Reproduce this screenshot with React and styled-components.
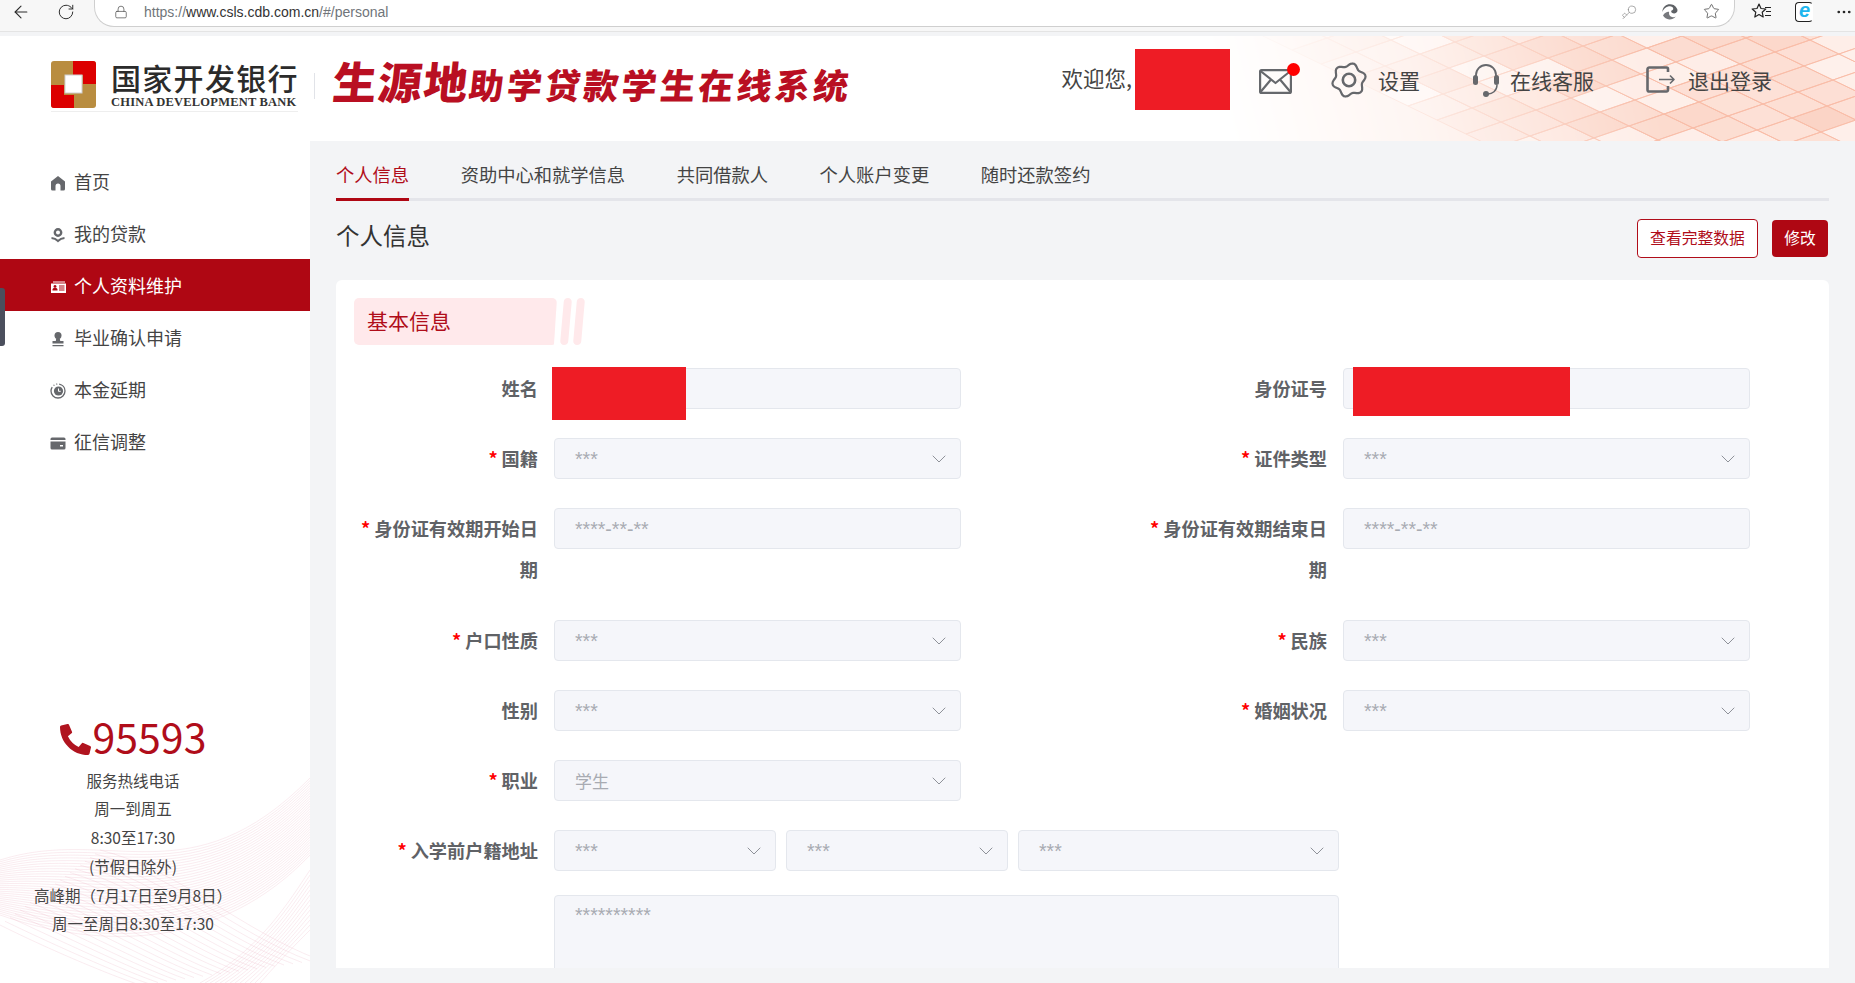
import styled, { createGlobalStyle } from "styled-components";
import { ArrowLeft, RotateCw, Lock, Key, Star, MoreHorizontal, ChevronDown } from "lucide-react";
import { FaPhoneAlt } from "react-icons/fa";

const GlobalStyle = createGlobalStyle`
  html, body {
    margin: 0;
    padding: 0;
    height: 983px;
    overflow: hidden;
    background: #fff;
    font-family: "Noto Sans CJK SC", "Noto Sans", sans-serif;
  }
  * { box-sizing: border-box; }
`;

const menuItems = [
  { key: "home", label: "首页", icon: <HomeIcon /> },
  { key: "loan", label: "我的贷款", icon: <LoanIcon /> },
  { key: "profile", label: "个人资料维护", icon: <CardIcon />, active: true },
  { key: "graduate", label: "毕业确认申请", icon: <StampIcon /> },
  { key: "extend", label: "本金延期", icon: <ClockIcon /> },
  { key: "credit", label: "征信调整", icon: <WalletIcon /> },
];

const tabs = ["个人信息", "资助中心和就学信息", "共同借款人", "个人账户变更", "随时还款签约"];

const hotline = [
  "服务热线电话",
  "周一到周五",
  "8:30至17:30",
  "(节假日除外)",
  "高峰期（7月17日至9月8日）",
  "周一至周日8:30至17:30",
];

// floor tiles of the header background
const tiles = [];
for (let i = -6; i < 24; i++) {
  for (let j = -6; j < 24; j++) {
    const x = 1560 + i * 35 + j * 29;
    const y = -30 - i * 12 + j * 14;
    if (x < 1150 || x > 1900 || y < -30 || y > 130) continue;
    const noise = Math.abs(Math.sin(i * 12.9898 + j * 78.233) * 43758.5453) % 1;
    tiles.push({ key: `${i}-${j}`, x, y, noise });
  }
}

function lerp(a, b, t) {
  return a + (b - a) * t;
}

// one ribbon of the sidebar wave: lines between two cubic curves
function ribbon(from, to, count) {
  const lines = [];
  for (let n = 0; n <= count; n++) {
    const t = n / count;
    const p = from.map((v, idx) => lerp(v, to[idx], t).toFixed(1));
    lines.push(`M${p[0]} ${p[1]}C${p[2]} ${p[3]} ${p[4]} ${p[5]} ${p[6]} ${p[7]}`);
  }
  return lines;
}

const waves = [
  ...ribbon([0, 140, 110, 105, 190, 180, 310, 58], [0, 195, 100, 230, 220, 230, 310, 135], 30),
  ...ribbon([100, 130, 180, 150, 240, 210, 320, 240], [0, 205, 50, 230, 110, 255, 140, 265], 20),
  ...ribbon([200, 263, 260, 230, 290, 180, 310, 150], [260, 263, 280, 240, 300, 220, 310, 210], 12),
];

function gearPath() {
  const pts = [];
  for (let a = 0; a < 360; a += 6) {
    const rad = (a * Math.PI) / 180;
    const r = 15.2 + 1.8 * Math.cos(6 * rad + Math.PI / 2 + Math.PI);
    pts.push(`${(18 + r * Math.sin(rad)).toFixed(2)} ${(18 - r * Math.cos(rad)).toFixed(2)}`);
  }
  return `M${pts.join("L")}Z`;
}

export default function App() {
  return (
    <Page>
      <GlobalStyle />
      <BrowserBar>
        <NavButton><ArrowLeft size={22} strokeWidth={1.3} /></NavButton>
        <NavButton $gap={25}><RotateCw size={18} strokeWidth={1.3} /></NavButton>
        <AddressPill>
          <Lock size={14} strokeWidth={1.3} color="#555" />
          <Url>
            https://<b>www.csls.cdb.com.cn</b>/#/personal
          </Url>
          <PillTools>
            <Key size={16} strokeWidth={1.1} color="#8d8d8d" style={{ transform: "rotate(180deg)" }} />
            <EdgeIcon />
            <Star size={17} strokeWidth={1.2} color="#555" />
          </PillTools>
        </AddressPill>
        <BarTools>
          <FavoritesIcon />
          <IeBadge>
            <IeLetter>e</IeLetter>
          </IeBadge>
          <MoreHorizontal size={18} strokeWidth={1.6} color="#222" />
        </BarTools>
      </BrowserBar>
      <Strip />

      <Header>
        <Tiles viewBox="0 0 1855 105" preserveAspectRatio="none">
          <defs>
            <linearGradient id="tileFade" gradientUnits="userSpaceOnUse" x1="1230" y1="105" x2="1640" y2="0">
              <stop offset="0" stopColor="#000" />
              <stop offset="0.45" stopColor="#555" />
              <stop offset="1" stopColor="#fff" />
            </linearGradient>
            <mask id="tileMask">
              <rect width="1855" height="105" fill="url(#tileFade)" />
            </mask>
          </defs>
          <g mask="url(#tileMask)">
            <rect width="1855" height="105" fill="#fde2d8" />
            {tiles.map((t) => (
              <path
                key={t.key}
                d={`M${t.x} ${t.y}l35 -12l29 14l-35 12z`}
                fill={t.noise > 0.7 ? "#ffffff" : "#f9b9a2"}
                fillOpacity={t.noise * 0.5}
                stroke="#f9bda8"
                strokeWidth="1"
              />
            ))}
          </g>
        </Tiles>

        <Brand>
          <LogoMark viewBox="0 0 45 47">
            <rect width="45" height="47" rx="3" fill="#b98d40" />
            <path d="M22 0h20a3 3 0 0 1 3 3v20H32V14H22z" fill="#dc0000" />
            <path d="M0 24h13v10h10v13H3a3 3 0 0 1-3-3z" fill="#dc0000" />
            <rect x="14" y="14" width="17" height="18" fill="#fff" stroke="#cfcfcf" />
          </LogoMark>
          <Wordmark>
            <BankName>国家开发银行</BankName>
            <BankNameEn>CHINA DEVELOPMENT BANK</BankNameEn>
          </Wordmark>
        </Brand>
        <BrandDivider />
        <SystemTitle>
          <big>生源地</big>助学贷款学生在线系统
        </SystemTitle>

        <HeaderRight>
          <Welcome>欢迎您,</Welcome>
          <UserMask />
          <MailButton>
            <MailIcon />
            <MailDot />
          </MailButton>
          <HeaderAction $gap={11}>
            <GearIcon />
            设置
          </HeaderAction>
          <HeaderAction $gap={10} $left={52}>
            <HeadsetIcon />
            在线客服
          </HeaderAction>
          <HeaderAction $gap={12} $left={52}>
            <ExitIcon />
            退出登录
          </HeaderAction>
        </HeaderRight>
      </Header>

      <Body>
        <Sidebar>
          <WaveArt viewBox="0 0 310 263">
            {waves.map((d, i) => (
              <path key={i} d={d} fill="none" stroke="#e9a6b8" strokeOpacity="0.36" strokeWidth="0.6" />
            ))}
          </WaveArt>
          <Menu>
            {menuItems.map((item) => (
              <MenuItem key={item.key} $active={item.active}>
                <MenuIcon>{item.icon}</MenuIcon>
                {item.label}
              </MenuItem>
            ))}
          </Menu>
          <Contact>
            <PhoneRow>
              <PhoneGlyph>
                <FaPhoneAlt size={31} color="#b0141f" />
              </PhoneGlyph>
              <PhoneNumber>95593</PhoneNumber>
            </PhoneRow>
            {hotline.map((line) => (
              <ContactLine key={line}>{line}</ContactLine>
            ))}
          </Contact>
          <SideHandle />
        </Sidebar>

        <Main>
          <Tabs>
            {tabs.map((tab, i) => (
              <Tab key={tab} $active={i === 0}>{tab}</Tab>
            ))}
          </Tabs>
          <TitleRow>
            <PageTitle>个人信息</PageTitle>
            <TitleActions>
              <OutlineButton>查看完整数据</OutlineButton>
              <FilledButton>修改</FilledButton>
            </TitleActions>
          </TitleRow>

          <Card>
            <SectionTag>
              <SectionLabel>基本信息</SectionLabel>
              <Slash />
              <Slash />
            </SectionTag>
            <FormGrid>
              <Field label="姓名">
                <Control>
                  <Redaction style={{ left: -3, width: 134, height: 53 }} />
                </Control>
              </Field>
              <Field label="身份证号">
                <Control>
                  <Redaction style={{ left: 9, width: 217, height: 49 }} />
                </Control>
              </Field>
              <Field label="国籍" required><SelectBox /></Field>
              <Field label="证件类型" required><SelectBox /></Field>
              <Field label="身份证有效期开始日期" required wrapped>
                <Control><Masked>****-**-**</Masked></Control>
              </Field>
              <Field label="身份证有效期结束日期" required wrapped>
                <Control><Masked>****-**-**</Masked></Control>
              </Field>
              <Field label="户口性质" required><SelectBox /></Field>
              <Field label="民族" required><SelectBox /></Field>
              <Field label="性别"><SelectBox /></Field>
              <Field label="婚姻状况" required><SelectBox /></Field>
              <Field label="职业" required><SelectBox value="学生" /></Field>
              <div />
              <WideField>
                <Field label="入学前户籍地址" required>
                  <AddressRow>
                    <SelectBox />
                    <SelectBox />
                    <SelectBox />
                  </AddressRow>
                </Field>
              </WideField>
              <WideField $tight>
                <Field label="">
                  <TextArea><Masked>**********</Masked></TextArea>
                </Field>
              </WideField>
            </FormGrid>
          </Card>
        </Main>
      </Body>
    </Page>
  );
}

function Field({ label, required, wrapped, children }) {
  return (
    <FieldRow $wrapped={wrapped}>
      <FieldLabel>
        {required && <Req>*</Req>}
        {label}
      </FieldLabel>
      {children}
    </FieldRow>
  );
}

function SelectBox({ value }) {
  return (
    <Control>
      {value ? <SelectValue>{value}</SelectValue> : <Masked>***</Masked>}
      <ChevronDown size={24} strokeWidth={1} color="#8f9299" />
    </Control>
  );
}

function EdgeIcon() {
  return (
    <svg width="20" height="20" viewBox="0 0 20 20" fill="none">
      <path d="M2.2 10a7.8 7.8 0 0 1 15-3c.9 2.3-.6 4.4-3 4.4-1.9 0-3-1-3-1.9 0-1.6 2.2-1 2-3-.2-1.7-2.2-2.7-4.4-2.2C5.7 4.9 3.5 7 2.2 10z" fill="#5f6266" />
      <path d="M3 13.6c1.8-3 4.6-4.2 6.2-3.6-.8 2.3.9 5 3.7 5.2 1.3.1 2.3-.2 3-.7A7.8 7.8 0 0 1 3 13.6z" fill="#77797d" />
    </svg>
  );
}

function FavoritesIcon() {
  return (
    <svg width="22" height="20" viewBox="0 0 22 20" fill="none" stroke="#222" strokeWidth="1.2" strokeLinejoin="round">
      <path d="M8 2l2 4.5 4.8.5-3.600 3.200 1 4.800L8 12.600 3.800 15l1-4.800L1.200 7 6 6.500z" />
      <path d="M14 5.500h6M15 9.500h5M14 13.500h6" />
    </svg>
  );
}

function MailIcon() {
  return (
    <svg width="33" height="25" viewBox="0 0 33 25" fill="none" stroke="#66686c" strokeWidth="2.2" strokeLinejoin="round">
      <rect x="1.1" y="1.1" width="30.8" height="22.8" rx="1.5" />
      <path d="M1.5 2l15 12 15-12M1.5 23l10.500-12.500M31.500 23L21 10.500" />
    </svg>
  );
}

function GearIcon() {
  return (
    <svg width="36" height="36" viewBox="0 0 36 36" fill="none" stroke="#66686c" strokeWidth="2.2" strokeLinejoin="round">
      <path d={gearPath()} />
      <circle cx="18" cy="18" r="6.2" strokeWidth="2.6" />
    </svg>
  );
}

function HeadsetIcon() {
  return (
    <svg width="28" height="36" viewBox="0 0 28 36" fill="none">
      <path d="M4 17V13a10 10 0 0 1 20 0v4" stroke="#66686c" strokeWidth="1.8" />
      <rect x="1" y="13" width="5" height="10" rx="2.5" fill="#66686c" />
      <rect x="22" y="13" width="5" height="10" rx="2.5" fill="#66686c" />
      <path d="M25 23c0 6-5 9-9 9" stroke="#66686c" strokeWidth="1.5" />
      <circle cx="14" cy="32" r="3" fill="#66686c" />
    </svg>
  );
}

function ExitIcon() {
  return (
    <svg width="30" height="27" viewBox="0 0 30 27" fill="none" stroke="#66686c" strokeLinejoin="round">
      <path d="M22 6V3a1.5 1.5 0 0 0-1.5-1.5h-17A1.8 1.8 0 0 0 1.5 3.3v20.400a1.8 1.8 0 0 0 1.8 1.8h17.200A1.5 1.5 0 0 0 22 24v-4" strokeWidth="2.6" />
      <path d="M13 13.500h15M24 9.500l4 4-4 4" strokeWidth="1.6" />
    </svg>
  );
}

function HomeIcon() {
  return (
    <svg width="16" height="16" viewBox="0 0 16 16" fill="currentColor">
      <path d="M8 1l7 5.500V14a1.500 1.500 0 0 1-1.500 1.500H10.500V11a2.500 2.500 0 0 0-5 0v4.500H2.500A1.500 1.500 0 0 1 1 14V6.500z" />
    </svg>
  );
}

function LoanIcon() {
  return (
    <svg width="16" height="16" viewBox="0 0 16 16" fill="none" stroke="currentColor">
      <circle cx="8" cy="5.500" r="3.200" strokeWidth="2.4" />
      <path d="M1.500 11c3 .2 5 1.500 6.500 3 1.500-1.500 3.500-2.800 6.500-3" strokeWidth="2" />
    </svg>
  );
}

function CardIcon() {
  return (
    <svg width="16" height="16" viewBox="0 0 16 16" fill="currentColor" fillRule="evenodd">
      <path d="M3 2.500h12v1H3zM1 4.500h15V14H1zM2.500 11.500h5v-1.300a2.500 1.500 0 0 0-5 0zM5 6a1.500 1.500 0 1 0 .01 0zM9 6.500h5.500v1H9zM9 8.500h5.500v1H9zM9 10.500h5.500v1H9z" />
    </svg>
  );
}

function StampIcon() {
  return (
    <svg width="16" height="16" viewBox="0 0 16 16" fill="currentColor">
      <circle cx="8" cy="4.500" r="3.500" />
      <path d="M6.300 7h3.400l.5 3h3.300v2.500H2.500V10h3.300zM2.500 14h11v1.300h-11z" />
    </svg>
  );
}

function ClockIcon() {
  return (
    <svg width="16" height="16" viewBox="0 0 16 16" fill="none">
      <circle cx="8" cy="8" r="7" stroke="currentColor" strokeWidth="1.3" strokeDasharray="26 2 1 2 1 2" />
      <circle cx="8.500" cy="8" r="4.600" fill="currentColor" />
      <path d="M8.500 5.500V8.300h2.200" stroke="#fff" strokeWidth="1" />
    </svg>
  );
}

function WalletIcon() {
  return (
    <svg width="16" height="16" viewBox="0 0 16 16" fill="currentColor">
      <path d="M2 2.500h12A1.500 1.500 0 0 1 15.500 4v1H.5V4A1.500 1.500 0 0 1 2 2.500zM.5 6.500h15V13a1.500 1.500 0 0 1-1.500 1.500H2A1.500 1.500 0 0 1 .5 13zM10 10v1.500h3V10z" fillRule="evenodd" />
    </svg>
  );
}

const Page = styled.div`
  width: 1855px;
  height: 983px;
  overflow: hidden;
  display: flex;
  flex-direction: column;
  background: #fff;
  color: #444;
`;

const BrowserBar = styled.div`
  height: 32px;
  flex: none;
  display: flex;
  align-items: flex-start;
  background: #f7f7f7;
  border-bottom: 1px solid #e4e4e4;
  padding-left: 11px;
`;

const NavButton = styled.div`
  width: 20px;
  height: 24px;
  flex: none;
  margin-left: ${(p) => p.$gap || 0}px;
  display: flex;
  align-items: center;
  justify-content: center;
  color: #2a2a2a;
`;

const AddressPill = styled.div`
  width: 1641px;
  height: 27px;
  flex: none;
  margin-left: 18px;
  padding: 0 14px 3px 19px;
  display: flex;
  align-items: center;
  background: #fff;
  border: 1px solid #cfcfcf;
  border-top: none;
  border-radius: 0 0 20px 20px;
`;

const Url = styled.span`
  margin-left: 16px;
  font: 14px "Liberation Sans", Arial, sans-serif;
  color: #70757a;

  b {
    font-weight: 400;
    color: #333;
  }
`;

const PillTools = styled.div`
  margin-left: auto;
  display: flex;
  align-items: center;
  gap: 23px;
`;

const BarTools = styled.div`
  height: 24px;
  flex: none;
  margin-left: 16px;
  display: flex;
  align-items: center;
  gap: 22px;
`;

const IeBadge = styled.div`
  position: relative;
  width: 18px;
  height: 20px;
  border: 1.5px solid #222;
  border-right-color: transparent;
  border-radius: 4px;
  background: #fff;
`;

const IeLetter = styled.span`
  position: absolute;
  left: 3px;
  top: -3px;
  font: italic 700 20px/20px "Liberation Sans", sans-serif;
  color: #1fb6ee;
`;

const Strip = styled.div`
  height: 4px;
  flex: none;
  background: #f3f4f6;
`;

const Header = styled.header`
  position: relative;
  flex: none;
  height: 105px;
  display: flex;
  align-items: center;
  background: #fff;
  padding-left: 51px;
`;

const Tiles = styled.svg`
  position: absolute;
  inset: 0;
  width: 100%;
  height: 100%;
`;

const Brand = styled.div`
  position: relative;
  display: flex;
  align-items: center;
  gap: 15px;
  width: 247px;
  margin-bottom: 6px;
  border-bottom: 1px solid #eeeeee;
  padding-bottom: 2px;
`;

const LogoMark = styled.svg`
  width: 45px;
  height: 47px;
  flex: none;
`;

const Wordmark = styled.div`
  display: flex;
  flex-direction: column;
  white-space: nowrap;
`;

const BankName = styled.span`
  font-size: 30px;
  line-height: 34px;
  letter-spacing: 1.3px;
  font-weight: 500;
  color: #2b2b2b;
`;

const BankNameEn = styled.span`
  font: 700 12.5px/14px "Liberation Serif", serif;
  margin-top: 1px;
  letter-spacing: 0.2px;
  color: #333;
`;

const BrandDivider = styled.div`
  position: relative;
  width: 1px;
  height: 26px;
  margin: 0 0 6px 16px;
  background: #e1e3e8;
`;

const SystemTitle = styled.h1`
  position: relative;
  margin: 0 0 14px 18px;
  font-size: 35px;
  font-weight: 900;
  line-height: 50px;
  letter-spacing: 3.3px;
  white-space: nowrap;
  color: #b90f22;
  transform: skewX(-6deg);

  big {
    font-size: 44px;
    letter-spacing: 1.4px;
  }
`;

const HeaderRight = styled.div`
  position: relative;
  margin-left: auto;
  margin-bottom: 18px;
  padding-right: 83px;
  display: flex;
  align-items: center;
`;

const Welcome = styled.span`
  margin-bottom: 4px;
  font-size: 21.5px;
  color: #444;
`;

const UserMask = styled.div`
  width: 95px;
  height: 61px;
  margin-left: 3px;
  background: #ee1c25;
`;

const MailButton = styled.div`
  position: relative;
  display: flex;
  margin: 3px 39px 0 29px;
`;

const MailDot = styled.span`
  position: absolute;
  right: -8px;
  top: -6px;
  width: 13px;
  height: 13px;
  border-radius: 50%;
  background: #ff0000;
`;

const HeaderAction = styled.div`
  display: flex;
  align-items: center;
  gap: ${(p) => p.$gap}px;
  margin-left: ${(p) => p.$left || 0}px;
  font-size: 21px;
  white-space: nowrap;
  color: #444;
`;

const Body = styled.div`
  flex: 1;
  min-height: 0;
  display: flex;
`;

const Sidebar = styled.aside`
  position: relative;
  width: 310px;
  flex: none;
  display: flex;
  flex-direction: column;
  background: #fff;
`;

const WaveArt = styled.svg`
  position: absolute;
  left: 0;
  bottom: 0;
  width: 310px;
  height: 263px;
`;

const Menu = styled.nav`
  position: relative;
  padding-top: 14px;
`;

const MenuItem = styled.div`
  height: 52px;
  padding-left: 50px;
  display: flex;
  align-items: center;
  gap: 8px;
  font-size: 18px;
  background: ${(p) => (p.$active ? "#af0713" : "transparent")};
  color: ${(p) => (p.$active ? "#fff" : "#444")};

  svg {
    color: ${(p) => (p.$active ? "#fff" : "#66686c")};
  }
`;

const MenuIcon = styled.span`
  display: flex;
  margin-top: 3px;
`;

const Contact = styled.div`
  position: relative;
  margin-top: auto;
  padding: 0 44px 45px 0;
  text-align: center;
`;

const PhoneRow = styled.div`
  height: 58px;
  display: flex;
  align-items: center;
  justify-content: center;
  gap: 2px;
`;

const PhoneGlyph = styled.span`
  display: flex;
  margin-top: 6px;
`;

const PhoneNumber = styled.span`
  margin-bottom: 4px;
  font-size: 41px;
  line-height: 54px;
  color: #b00d1a;
`;

const ContactLine = styled.div`
  font-size: 15.5px;
  line-height: 28.7px;
  white-space: nowrap;
  color: #444;
`;

const SideHandle = styled.div`
  position: absolute;
  left: 0;
  top: 147px;
  width: 5px;
  height: 58px;
  border-radius: 0 3px 3px 0;
  background: #4b4f5d;
`;

const Main = styled.main`
  flex: 1;
  min-width: 0;
  display: flex;
  flex-direction: column;
  padding: 0 26px 15px;
  background: #f3f4f6;
`;

const Tabs = styled.div`
  flex: none;
  display: flex;
  gap: 51.5px;
  border-bottom: 3px solid #e4e5ea;
`;

const Tab = styled.div`
  padding: 20px 0 11px;
  margin-bottom: -3px;
  font-size: 18.3px;
  line-height: 26px;
  border-bottom: 3px solid ${(p) => (p.$active ? "#af0713" : "transparent")};
  color: ${(p) => (p.$active ? "#b00d1a" : "#444")};
`;

const TitleRow = styled.div`
  flex: none;
  margin: 18px 0 22px;
  height: 39px;
  display: flex;
  align-items: center;
  justify-content: space-between;
`;

const PageTitle = styled.h2`
  margin: 0 0 7px;
  font-size: 23.5px;
  font-weight: 400;
  color: #333;
`;

const TitleActions = styled.div`
  display: flex;
  align-items: center;
  gap: 14px;
  padding-right: 1px;
`;

const OutlineButton = styled.button`
  width: 121px;
  height: 39px;
  padding: 0 0 2px;
  font-family: inherit;
  font-size: 15.8px;
  border: 1px solid #b00d1a;
  border-radius: 4px;
  background: #fff;
  color: #b00d1a;
`;

const FilledButton = styled.button`
  width: 56px;
  height: 37px;
  padding: 0 0 2px;
  font-family: inherit;
  font-size: 15.8px;
  border: none;
  border-radius: 4px;
  background: #af0713;
  color: #fff;
`;

const Card = styled.section`
  flex: 1;
  min-height: 0;
  overflow: hidden;
  padding: 18px 18px 0;
  border-radius: 6px 6px 0 0;
  background: #fff;
`;

const SectionTag = styled.div`
  height: 47px;
  display: flex;
  align-items: stretch;
  gap: 5px;
`;

const SectionLabel = styled.div`
  width: 203px;
  padding-left: 13px;
  font-size: 21px;
  line-height: 45px;
  background: #ffe9eb;
  border-radius: 5px;
  clip-path: polygon(0 0, 100% 0, 98.5% 100%, 0 100%);
  color: #b00d1a;
`;

const Slash = styled.span`
  width: 8px;
  border-radius: 4px;
  background: #ffe9eb;
  transform: skewX(-5deg);
`;

const FormGrid = styled.div`
  margin: 23px 0 0 2px;
  display: grid;
  grid-template-columns: 605px 605px;
  column-gap: 184px;
  row-gap: 29px;
`;

const WideField = styled.div`
  grid-column: 1 / -1;
  margin-top: ${(p) => (p.$tight ? "-5px" : "0")};
`;

const FieldRow = styled.div`
  display: grid;
  grid-template-columns: 198px 1fr;
  padding-bottom: ${(p) => (p.$wrapped ? "1px" : "0")};
`;

const FieldLabel = styled.label`
  padding-left: 2px;
  padding-right: 16px;
  text-align: right;
  font-size: 18.2px;
  font-weight: 700;
  line-height: 41px;
  color: #606266;
`;

const Req = styled.span`
  margin-right: 4px;
  color: #f00;
`;

const Control = styled.div`
  position: relative;
  height: 41px;
  min-width: 0;
  padding: 0 9px 0 20px;
  display: flex;
  align-items: center;
  justify-content: space-between;
  border: 1px solid #e4e7ed;
  border-radius: 4px;
  background: #f5f6fa;
`;

const Masked = styled.span`
  margin-top: 1px;
  font: 19.5px/24px "Liberation Sans", sans-serif;
  color: #a8abb2;
`;

const SelectValue = styled.span`
  margin-bottom: 1px;
  font-size: 17px;
  color: #a8abb2;
`;

const Redaction = styled.div`
  position: absolute;
  top: -2px;
  background: #ee1c25;
`;

const AddressRow = styled.div`
  display: grid;
  grid-template-columns: 222px 222px 321px;
  column-gap: 10px;
`;

const TextArea = styled.div`
  width: 785px;
  height: 120px;
  padding: 7px 20px;
  border: 1px solid #e4e7ed;
  border-radius: 4px;
  background: #f5f6fa;
`;
